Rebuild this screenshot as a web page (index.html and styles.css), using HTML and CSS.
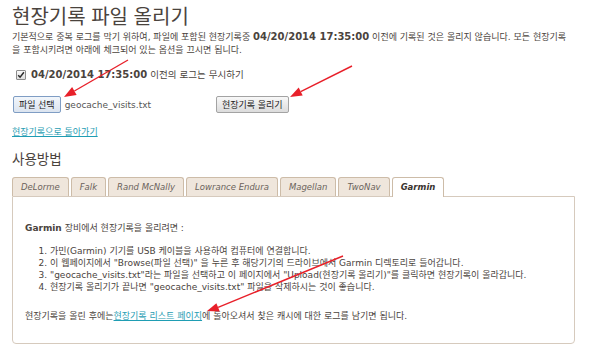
FILE: index.html
```html
<!DOCTYPE html>
<html lang="ko">
<head>
<meta charset="utf-8">
<title>현장기록 파일 올리기</title>
<link rel="stylesheet" href="styles.css">
</head>
<body>
<div class="page">
  <h1 class="title">현장기록 파일 올리기</h1>
  <p class="intro"><span>기본적으로 중복 로그를 막기 위하여, 파일에 포함된 현장기록중 </span><b>04/20/2014 17:35:00</b><span> 이전에 기록된 것은 올리지 않습니다. 모든 현장기록</span><span>을 포함시키려면 아래에 체크되어 있는 옵션을 끄시면 됩니다.</span></p>
  <label class="ignore"><span class="check" role="checkbox" aria-checked="true"><svg width="8" height="8" viewBox="0 0 8 8"><path d="M1.2 4.2 L3.1 6.2 L6.9 1.3" stroke="#2b2b2b" stroke-width="1.5" fill="none"/></svg></span><b>04/20/2014 17:35:00</b> 이전의 로그는 무시하기</label>
  <div class="upload-row">
    <button class="btn btn-file" type="button">파일 선택</button>
    <span class="filename">geocache_visits.txt</span>
    <button class="btn btn-upload" type="button">현장기록 올리기</button>
  </div>
  <a class="link back" href="#">현장기록으로 돌아가기</a>
  <h2 class="subtitle">사용방법</h2>
  <div class="tabs">
    <span class="tab">DeLorme</span>
    <span class="tab">Falk</span>
    <span class="tab">Rand McNally</span>
    <span class="tab">Lowrance Endura</span>
    <span class="tab">Magellan</span>
    <span class="tab">TwoNav</span>
    <span class="tab active">Garmin</span>
  </div>
  <div class="panel">
    <p class="lead"><b>Garmin</b> 장비에서 현장기록을 올리려면 :</p>
    <ol class="steps">
      <li>가민(Garmin) 기기를 USB 케이블을 사용하여 컴퓨터에 연결합니다.</li>
      <li>이 웹페이지에서 "Browse(파일 선택)" 을 누른 후 해당기기의 드라이브에서 Garmin 디렉토리로 들어갑니다.</li>
      <li>"geocache_visits.txt"라는 파일을 선택하고 이 페이지에서 "Upload(현장기록 올리기)"를 클릭하면 현장기록이 올라갑니다.</li>
      <li>현장기록 올리기가 끝나면 "geocache_visits.txt" 파일을 삭제하시는 것이 좋습니다.</li>
    </ol>
    <p class="after">현장기록을 올린 후에는<a class="link" href="#">현장기록 리스트 페이지</a>에 돌아오셔서 찾은 캐시에 대한 로그를 남기면 됩니다.</p>
  </div>
</div>
<svg class="arrows" width="590" height="350" viewBox="0 0 590 350" aria-hidden="true">
  <g stroke="#e8202a" stroke-width="1.4" fill="none">
    <line x1="128" y1="60" x2="74.4" y2="91"/>
    <line x1="352" y1="66" x2="300.7" y2="91.6"/>
    <line x1="343" y1="256" x2="218.1" y2="307.4"/>
  </g>
  <g fill="#e8202a">
    <polygon points="64,97 76.6,94.9 72.1,87.1"/>
    <polygon points="290,97 302.7,95.6 298.7,87.6"/>
    <polygon points="207,311 219.8,311.6 216.4,303.2"/>
  </g>
</svg>
</body>
</html>
```
FILE: styles.css
```css
html, body {
  margin: 0;
  padding: 0;
  background: #ffffff;
}
body {
  font-family: "DejaVu Sans", "Noto Sans CJK KR", sans-serif;
  font-size: 9px;
  color: #4a433d;
  position: relative;
  width: 590px;
  height: 350px;
  overflow: hidden;
}
.page {
  padding: 0 12px;
  display: flex;
  flex-direction: column;
  align-items: flex-start;
}
.title {
  margin: 4px 0 0;
  font-size: 20px;
  line-height: 24px;
  font-weight: normal;
  font-family: "Noto Sans CJK KR", "DejaVu Sans", sans-serif;
  color: #4a433d;
}
.intro {
  margin: 2px 0 0;
  line-height: 13px;
  width: 561px;
}
.intro b {
  font-size: 10px;
}
.ignore {
  margin-top: 10px;
  display: flex;
  align-items: center;
  line-height: 16px;
  font-size: 9.5px;
}
.ignore b {
  font-size: 10px;
  margin-right: 3px;
}
.check {
  box-sizing: border-box;
  width: 10px;
  height: 10px;
  margin: 0 5px 0 4px;
  border: 1px solid #8c8c8c;
  border-radius: 1px;
  background: linear-gradient(#fafafa, #dedede);
  display: flex;
  align-items: center;
  justify-content: center;
}
.upload-row {
  margin-top: 13px;
  display: flex;
  align-items: center;
  height: 17px;
}
.btn {
  font-family: "Noto Sans CJK KR", "DejaVu Sans", sans-serif;
  font-size: 9px;
  height: 17px;
  line-height: 15px;
  border-radius: 2px;
  color: #222;
  white-space: nowrap;
}
.btn-file {
  margin-left: 1px;
  padding: 0 5px;
  border: 1px solid #7f9dc4;
  background: linear-gradient(#f2f6fb, #dbe4ef);
}
.btn-upload {
  margin-left: 65px;
  padding: 0 5px;
  border: 1px solid #a3a3a3;
  background: linear-gradient(#f8f8f8, #dcdcdc);
}
.filename {
  margin-left: 4px;
  font-size: 9px;
  color: #555;
}
.link {
  color: #1f9db3;
  text-decoration: underline;
}
.back {
  margin-top: 13px;
  line-height: 13px;
}
.subtitle {
  margin: 10px 0 0;
  font-size: 13.5px;
  line-height: 18px;
  font-weight: normal;
  font-family: "Noto Sans CJK KR", "DejaVu Sans", sans-serif;
  color: #4a433d;
}
.tabs {
  margin-top: 10px;
  display: flex;
  gap: 2px;
  position: relative;
  z-index: 1;
}
.tab {
  height: 18px;
  line-height: 18px;
  padding: 0 8px;
  border: 1px solid #cdbca8;
  border-bottom: none;
  border-radius: 3px 3px 0 0;
  background: #efe6dc;
  font-style: italic;
  color: #6a625b;
  font-size: 8.5px;
}
.tab.active {
  background: #ffffff;
  font-weight: bold;
  color: #3a342f;
  height: 19px;
  margin-bottom: -1px;
}
.panel {
  width: 563px;
  box-sizing: border-box;
  border: 1px solid #d6cabd;
  border-radius: 0 0 4px 4px;
  padding: 25px 12px 19px;
  height: 148px;
}
.lead {
  margin: 0;
  line-height: 12px;
}
.steps {
  margin: 11px 0 0;
  padding-left: 25px;
  line-height: 12px;
}
.after {
  margin: 17px 0 0;
  line-height: 12px;
}
.arrows {
  position: absolute;
  left: 0;
  top: 0;
  pointer-events: none;
}
```
